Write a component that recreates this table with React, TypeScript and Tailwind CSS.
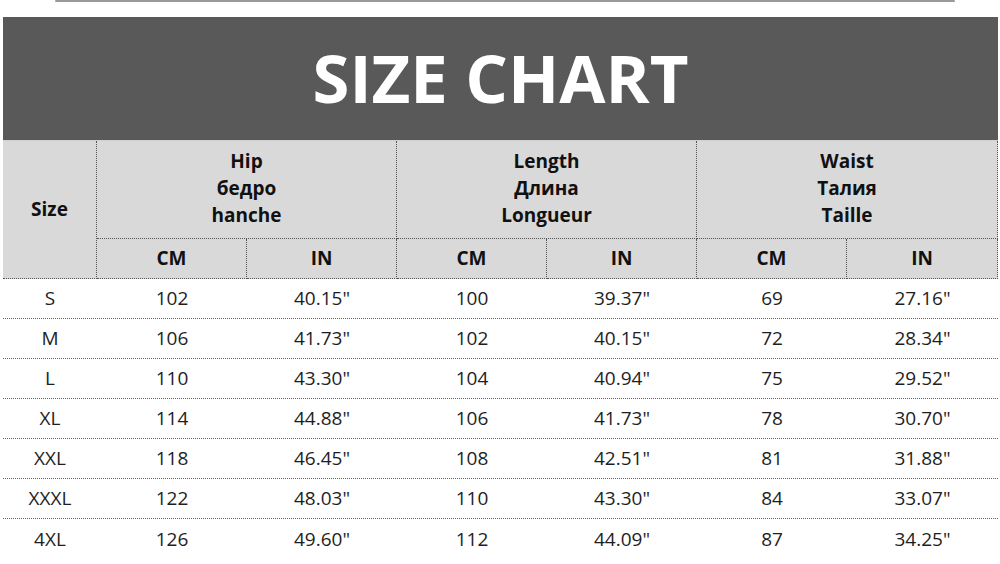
import React from "react";

const rows = [
  ["S", "102", "40.15\"", "100", "39.37\"", "69", "27.16\""],
  ["M", "106", "41.73\"", "102", "40.15\"", "72", "28.34\""],
  ["L", "110", "43.30\"", "104", "40.94\"", "75", "29.52\""],
  ["XL", "114", "44.88\"", "106", "41.73\"", "78", "30.70\""],
  ["XXL", "118", "46.45\"", "108", "42.51\"", "81", "31.88\""],
  ["XXXL", "122", "48.03\"", "110", "43.30\"", "84", "33.07\""],
  ["4XL", "126", "49.60\"", "112", "44.09\"", "87", "34.25\""],
];

const cols = "grid grid-cols-[94px_150px_150px_150px_150px_150px_151px]";

export default function App() {
  return (
    <div
      className="w-[1000px] h-[564px] bg-white overflow-hidden"
      style={{ fontFamily: '"Open Sans", "Noto Sans", sans-serif' }}
    >
      <div className="ml-[55px] w-[900px] h-[2px] bg-[#9a9a9a] rounded-full" />
      <div className="ml-[3px] w-[995px] mt-[15px] h-[123px] bg-[#595959] flex items-center justify-center">
        <span className="text-white text-[67px] font-bold leading-none pb-[2px]">
          SIZE CHART
        </span>
      </div>
      <div
        className={`${cols} grid-rows-[98px_40px] ml-[3px] w-[995px] bg-[#d9d9d9] border-t border-dotted border-[#c8c8c8] text-[#111] font-bold text-[19px] leading-[27px]`}
      >
        <div className="row-span-2 flex items-center justify-center border-r border-b border-dotted border-[#555]">
          Size
        </div>
        {[
          ["Hip", "бедро", "hanche"],
          ["Length", "Длина", "Longueur"],
          ["Waist", "Талия", "Taille"],
        ].map((h, i) => (
          <div
            key={i}
            className="col-span-2 flex flex-col items-center justify-center border-r border-b border-dotted border-[#555] pb-[2px]"
          >
            {h.map((t) => (
              <span key={t}>{t}</span>
            ))}
          </div>
        ))}
        {["CM", "IN", "CM", "IN", "CM", "IN"].map((t, i) => (
          <div
            key={i}
            className="flex items-center justify-center border-r border-b border-dotted border-[#555]"
          >
            {t}
          </div>
        ))}
      </div>
      <div className="ml-[3px] w-[995px] text-[19px] text-[#1e1e1e]">
        {rows.map((r, i) => (
          <div
            key={i}
            className={`${cols} h-[40px] ${i < rows.length - 1 ? "border-b border-dotted border-[#666]" : ""}`}
          >
            {r.map((c, j) => (
              <div key={j} className="flex items-center justify-center">
                {c}
              </div>
            ))}
          </div>
        ))}
      </div>
    </div>
  );
}
